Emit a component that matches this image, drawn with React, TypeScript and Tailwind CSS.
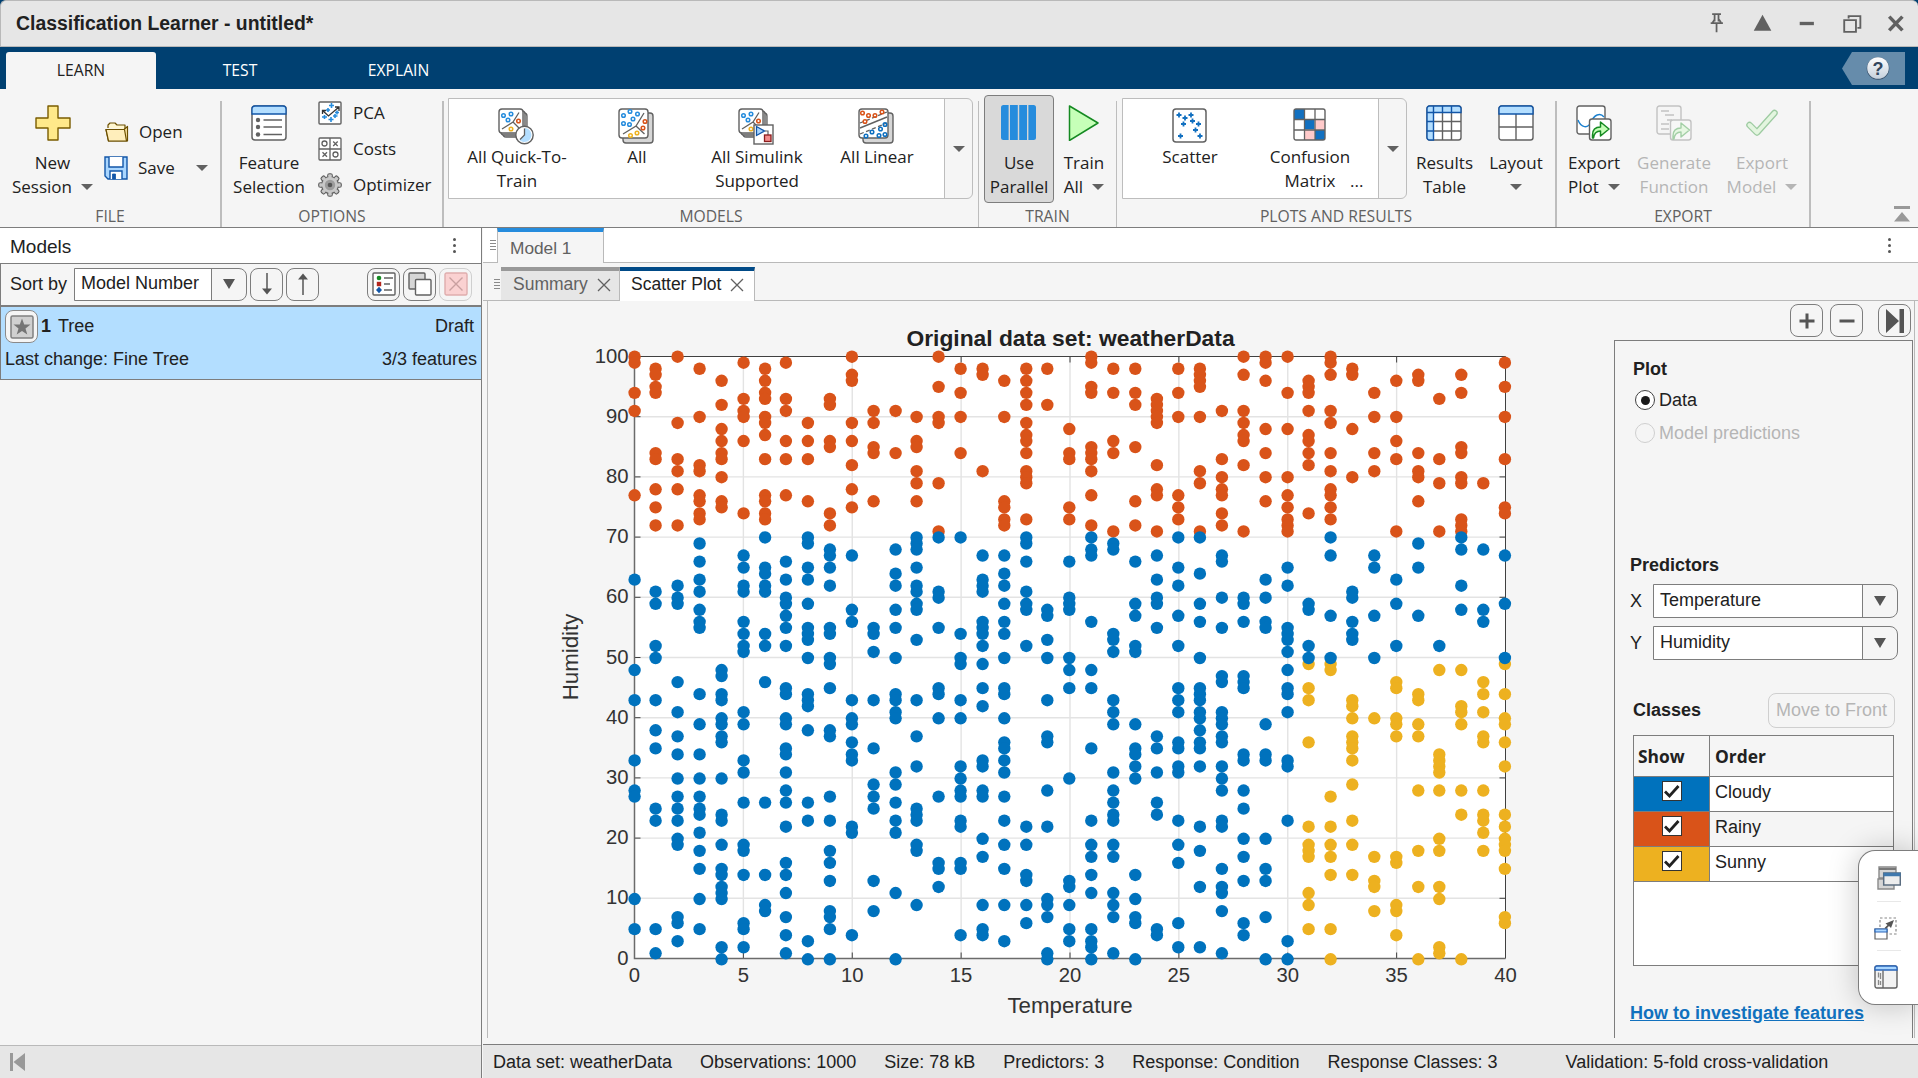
import type { ReactNode } from "react";

type Column = { red?: number[]; blue?: number[]; yellow?: number[] };

// Humidity values for every whole temperature from 0 to 40, split by class.
const columns: Column[] = [
  { red: [100, 99, 94, 91, 77], blue: [63, 48, 43, 33, 28, 27, 10, 5] },
  { red: [98, 97, 95, 94, 84, 83, 78, 75, 72], blue: [61, 59, 52, 50, 43, 38, 35, 25, 23, 5, 1] },
  { red: [100, 89, 83, 81, 78, 72], blue: [62, 60, 59, 46, 41, 37, 34, 30, 27, 25, 23, 20, 19, 7, 6, 3] },
  { red: [98, 90, 82, 81, 77, 76, 74, 73], blue: [69, 66, 63, 61, 58, 56, 55, 44, 39, 34, 30, 27, 25, 24, 21, 18, 15, 10, 5] },
  { red: [96, 92, 88, 86, 84, 83, 80, 76, 75], blue: [48, 47, 44, 43, 40, 39, 37, 36, 30, 24, 23, 19, 15, 14, 12, 11, 10, 2, 0] },
  { red: [99, 93, 91, 90, 86, 74], blue: [67, 65, 62, 61, 56, 54, 52, 51, 41, 39, 33, 31, 26, 19, 18, 14, 6, 5, 2] },
  { red: [98, 96, 94, 93, 90, 89, 87, 83, 77, 76, 74, 73], blue: [70, 65, 64, 62, 61, 54, 52, 46, 26, 14, 9, 8] },
  { red: [99, 93, 91, 86, 83, 77], blue: [66, 63, 60, 59, 57, 55, 52, 45, 44, 40, 39, 35, 34, 31, 28, 26, 22, 16, 14, 11, 7, 4, 1] },
  { red: [89, 86, 83, 76], blue: [70, 69, 65, 63, 59, 55, 54, 53, 50, 44, 43, 42, 38, 26, 23, 3, 0] },
  { red: [93, 92, 86, 85, 74, 72], blue: [68, 67, 65, 62, 55, 54, 50, 49, 45, 38, 37, 27, 23, 18, 16, 13, 8, 7, 5, 0] },
  { red: [100, 97, 96, 89, 86, 82, 78, 75], blue: [67, 58, 56, 43, 40, 39, 36, 34, 33, 22, 21, 4] },
  { red: [91, 89, 85, 84, 76], blue: [55, 54, 51, 43, 35, 29, 27, 25, 13, 8] },
  { red: [91, 84], blue: [68, 64, 62, 58, 55, 50, 44, 43, 41, 40, 31, 29, 26, 23, 21, 11, 0] },
  { red: [90, 86, 85, 81, 79, 76], blue: [70, 69, 68, 65, 62, 61, 59, 58, 53, 43, 37, 32, 25, 24, 23, 19, 18, 9] },
  { red: [100, 95, 90, 89, 79, 71], blue: [70, 61, 60, 55, 45, 44, 40, 27, 16, 15, 12] },
  { red: [98, 94, 90, 84], blue: [70, 54, 50, 49, 43, 40, 32, 30, 28, 27, 23, 22, 16, 15, 4] },
  { red: [98, 97, 81], blue: [67, 63, 62, 61, 56, 55, 54, 52, 49, 45, 42, 33, 32, 28, 27, 20, 17, 9, 5, 4] },
  { red: [96, 90, 76, 75, 73, 72], blue: [67, 64, 62, 59, 56, 54, 50, 45, 44, 40, 36, 35, 33, 31, 27, 23, 19, 15, 9, 3] },
  { red: [98, 96, 94, 92, 89, 87, 86, 84, 81, 80, 79, 73], blue: [70, 69, 66, 61, 59, 58, 52, 22, 19, 14, 13, 9, 6] },
  { red: [98, 92], blue: [58, 57, 53, 50, 43, 37, 36, 28, 22, 10, 9, 7, 1, 0] },
  { red: [88, 84, 83, 75, 73], blue: [66, 60, 59, 58, 50, 48, 45, 30, 13, 12, 9, 5, 3] },
  { red: [100, 99, 95, 94, 85, 84, 83, 81, 77, 72], blue: [70, 68, 67, 56, 48, 45, 35, 23, 19, 17, 14, 11, 5, 3, 2, 0] },
  { red: [98, 94, 86, 84, 71], blue: [69, 68, 54, 53, 51, 43, 41, 39, 31, 28, 26, 24, 23, 19, 17, 11, 9, 7, 1] },
  { red: [98, 94, 92, 85, 76, 72], blue: [66, 59, 57, 52, 51, 39, 35, 34, 32, 30, 14, 10, 7, 6, 0] },
  { red: [93, 92, 91, 90, 89, 82, 78, 77, 71], blue: [67, 63, 60, 59, 55, 37, 35, 31, 26, 24, 5, 4] },
  { red: [98, 94, 90, 77, 75, 73], blue: [70, 65, 62, 57, 52, 45, 43, 41, 36, 35, 32, 31, 23, 19, 16, 6, 2] },
  { red: [98, 97, 96, 95, 90, 81, 79, 71], blue: [70, 64, 59, 56, 50, 45, 44, 43, 41, 40, 38, 36, 35, 32, 22, 18, 12, 2] },
  { red: [91, 83, 80, 78, 77, 74, 72], blue: [67, 66, 60, 55, 47, 46, 41, 40, 39, 37, 36, 32, 30, 28, 23, 22, 15, 12, 11, 8, 1] },
  { red: [100, 97, 91, 89, 87, 86, 82, 71], blue: [60, 59, 56, 47, 46, 45, 34, 33, 28, 25, 20, 17, 13, 6, 4] },
  { red: [100, 99, 96, 88, 84, 80, 76], blue: [63, 60, 56, 55, 39, 34, 33, 20, 15, 13, 7, 0] },
  { red: [100, 94, 88, 80, 77, 75, 73, 72, 71], blue: [65, 62, 55, 54, 53, 51, 48, 45, 44, 41, 33, 32, 23, 3, 0] },
  { red: [96, 95, 94, 91, 87, 86, 84, 82, 74], blue: [59, 58, 52, 50], yellow: [49, 45, 43, 36, 22, 19, 18, 17, 11, 9, 5] },
  { red: [100, 99, 97, 91, 89, 84, 81, 78, 77, 75, 73], blue: [70, 67, 57, 50], yellow: [49, 48, 27, 22, 19, 17, 14, 5, 0] },
  { red: [98, 97, 88, 80], blue: [61, 60, 56, 54, 53], yellow: [43, 42, 40, 37, 36, 35, 33, 29, 23, 19, 14] },
  { red: [94, 90, 84, 81], blue: [67, 65, 57, 50], yellow: [40, 17, 13, 12, 8] },
  { red: [96, 90, 86, 83, 71], blue: [63, 59, 52], yellow: [46, 45, 40, 39, 37, 17, 16, 9, 8, 4] },
  { red: [97, 96, 84, 81, 80, 76], blue: [69, 65, 57], yellow: [44, 43, 39, 37, 28, 18, 12, 0] },
  { red: [93, 83, 79, 71], blue: [52], yellow: [48, 34, 33, 32, 31, 28, 20, 18, 12, 10, 2, 1] },
  { red: [97, 94, 85, 84, 80, 79, 73, 72, 71], blue: [70, 68, 62, 58], yellow: [48, 42, 41, 39, 28, 24, 0] },
  { red: [79], blue: [68, 58, 56], yellow: [46, 44, 41, 37, 36, 28, 24, 23, 21, 18] },
  { red: [99, 95, 90, 83, 75, 74], blue: [67, 59, 50], yellow: [49, 44, 40, 39, 36, 32, 24, 22, 20, 19, 18, 15, 7, 6] },
];

const snap = [
  0, 21, 43, 65, 87, 109, 130.5, 151.3, 173.3, 195.3, 217.3, 239, 261, 282, 304, 326, 348, 369.7, 391.7, 412.7, 434.7,
  456.7, 478.7, 500.7, 522.3, 543.7, 565.3, 587.3, 609, 631, 653, 674, 696, 717.7, 739.7, 761.7, 783.7, 804.7, 826.7,
  848.7, 870.3,
];
const classes = [
  { key: "red" as const, color: "#d95319" },
  { key: "yellow" as const, color: "#edb120" },
  { key: "blue" as const, color: "#0072bd" },
];
const L = 634.5, R = 1505.5, T = 356.5, B = 958.5;
const px = (v: number) => L + (v * (R - L)) / 40;
const py = (v: number) => B - (v * (B - T)) / 100;

function Chart() {
  const xs = [0, 5, 10, 15, 20, 25, 30, 35, 40];
  const ys = [0, 10, 20, 30, 40, 50, 60, 70, 80, 90, 100];
  return (
    <svg viewBox="488 301 1126 737" className="h-[737px] w-[1126px] shrink-0 font-['Liberation_Sans',sans-serif]">
      <rect x={L} y={T} width={R - L} height={B - T} fill="#fff" />
      {xs.slice(1, -1).map((v) => (
        <g key={v}>
          <path d={`M${px(v)} ${T}V${B}`} stroke="#e3e3e3" strokeWidth="1.4" />
          <path d={`M${px(v)} ${T}v6M${px(v)} ${B}v-6`} stroke="#404040" />
        </g>
      ))}
      {ys.slice(1, -1).map((v) => (
        <g key={v}>
          <path d={`M${L} ${py(v)}H${R}`} stroke="#e3e3e3" strokeWidth="1.4" />
          <path d={`M${L} ${py(v)}h6M${R} ${py(v)}h-6`} stroke="#404040" />
        </g>
      ))}
      <path d={`M${L} ${T}H${R}V${B}`} fill="none" stroke="#404040" />
      <path d={`M${L} ${T}V${B}H${R}`} fill="none" stroke="#6b6b6b" strokeWidth="1.5" />
      {xs.map((v) => (
        <text key={v} x={px(v)} y={981.5} fontSize="20.3" fill="#333" textAnchor="middle">{v}</text>
      ))}
      {ys.map((v) => (
        <text key={v} x={628.5} y={py(v) + 6} fontSize="20.3" fill="#333" textAnchor="end">{v}</text>
      ))}
      {classes.map((c) => (
        <g key={c.key} fill={c.color}>
          {columns.map((col, i) =>
            (col[c.key] ?? []).map((v) => (
              <circle key={`${i}-${v}`} cx={634.6 + snap[i]} cy={356.7 + (100 - v) * 6.026} r="6.2" />
            )),
          )}
        </g>
      ))}
      <text x="1070.5" y="346" fontSize="22.8" fontWeight="700" fill="#212121" textAnchor="middle">Original data set: weatherData</text>
      <text x="1070" y="1012.500" fontSize="22.3" fill="#333" textAnchor="middle">Temperature</text>
      <text transform="translate(578 657) rotate(-90)" fontSize="22.3" fill="#333" textAnchor="middle">Humidity</text>
    </svg>
  );
}

function Caret({ className = "" }: { className?: string }) {
  return (
    <svg viewBox="0 0 12 6" className={`h-[6px] w-[12px] shrink-0 ${className}`} fill="currentColor">
      <path d="M0 0h12L6 6z" />
    </svg>
  );
}

function Section({ title, width, line = "w-px", children }: { title: string; width: string; line?: string; children: ReactNode }) {
  return (
    <div className={`flex h-full shrink-0 ${width}`}>
      <div className="flex min-w-0 flex-1 flex-col">
        <div className="flex h-[116px]">{children}</div>
        <div className="mt-[2px] text-center text-[15.7px] leading-[22px] text-[#616161]">{title}</div>
      </div>
      <div className={`mt-[12px] h-[126px] shrink-0 bg-[#bdbdbd] ${line}`} />
    </div>
  );
}

function Big({ icon, lines, width, dim, arrow }: { icon: ReactNode; lines: string[]; width: string; dim?: boolean; arrow?: boolean }) {
  return (
    <div className={`flex shrink-0 flex-col items-center pt-4 leading-[24px] ${width} ${dim ? "text-[#b5b5b5]" : "text-[#212121]"}`}>
      <div className="h-[46px]">{icon}</div>
      <div>{lines[0]}</div>
      <div className="flex h-6 items-center gap-[9px] whitespace-nowrap">
        {lines[1]}
        {arrow && <Caret className={dim ? "text-[#b5b5b5]" : "text-[#616161]"} />}
      </div>
    </div>
  );
}

function GalleryItem({ icon, lines }: { icon: ReactNode; lines: string[] }) {
  return (
    <div className="flex w-[120px] shrink-0 flex-col items-center pt-[9px] leading-[24px]">
      <div className="mr-[2px] h-[37px]">{icon}</div>
      {lines.map((l) => (
        <div key={l} className="whitespace-nowrap">{l}</div>
      ))}
    </div>
  );
}

const S = "#616161";

function PlusIcon() {
  return (
    <svg viewBox="0 0 36 36" className="size-9">
      <path d="M13 1h10v12h12v10H23v12H13V23H1V13h12z" fill="#ffe98a" stroke="#7a5c00" strokeWidth="1.4" strokeLinejoin="round" />
    </svg>
  );
}
function FolderIcon() {
  return (
    <svg viewBox="0 0 24 20" className="h-5 w-6" stroke="#6b4f00" strokeWidth="1.2" strokeLinejoin="round">
      <path d="M3 6V3l2-2h5l2 2h8v4" fill="#fff6cf" />
      <path d="M1 7.500h18l3.500-3v14.500H3.500z" fill="#ffe9a8" />
      <path d="M1 7.500h18.500l2 11.500h-18z" fill="#ffeebb" />
    </svg>
  );
}
function SaveIcon() {
  return (
    <svg viewBox="0 0 24 24" className="size-6" stroke="#1256a8" strokeWidth="1.4">
      <path d="M1 1h22v22H4l-3-3z" fill="#a9d6ff" />
      <path d="M5 1v10h14V1" fill="#fff" />
      <path d="M6 23v-8h12v8" fill="#fff" />
      <path d="M8.500 18h3v5h-3z" fill="#1256a8" strokeWidth=".8" />
    </svg>
  );
}
function FeatureIcon() {
  return (
    <svg viewBox="0 0 36 36" className="size-9">
      <rect x="1" y="1" width="34" height="34" rx="3" fill="#fff" stroke={S} strokeWidth="1.5" />
      <path d="M1 9V4a3 3 0 0 1 3-3h28a3 3 0 0 1 3 3v5z" fill="#b3deff" stroke="#1256a8" strokeWidth="1.3" />
      <path d="M12.500 15H31M12.500 22H31M12.500 29.500H31" stroke={S} strokeWidth="1.3" />
      <g fill={S}><circle cx="7" cy="15" r="2.200" /><circle cx="7" cy="22" r="2.200" /><circle cx="7" cy="29.500" r="2.200" /></g>
    </svg>
  );
}
function PcaIcon() {
  return (
    <svg viewBox="0 0 24 24" className="size-6">
      <rect x="1" y="1" width="22" height="22" rx="1" fill="#fff" stroke={S} strokeWidth="1.4" />
      <path d="M13.500 2v5M11 4.500h5M10 7v4M8 9h4M6.500 14v4M4 16h5M13 16v5M10.500 18.500h5M17 13v4M15 15h4.500M19 9.500v4M17 11.500h4" stroke="#268cdd" strokeWidth="1.600" />
      <path d="M4.500 9.500l6 5.500L21 6M4.500 13V9.500H8M17 6h4v4" fill="none" stroke="#333" strokeWidth="1.300" />
    </svg>
  );
}
function CostsIcon() {
  return (
    <svg viewBox="0 0 24 24" className="size-6" fill="none" stroke={S} strokeWidth="1.3">
      <rect x="1" y="1" width="22" height="22" rx="1" fill="#fff" />
      <path d="M12 1v22M1 12h22" />
      <circle cx="6.500" cy="6.500" r="2.500" /><circle cx="17.500" cy="17.500" r="2.500" />
      <path d="M15.200 4.500l4.500 4.500m0-4.500l-4.500 4.500M4.500 15.200l4.500 4.500m0-4.500l-4.500 4.500" />
    </svg>
  );
}
function GearIcon() {
  return (
    <svg viewBox="0 0 24 24" className="size-6">
      {[0, 45, 90, 135].map((a) => (
        <rect key={a} x="9.800" y=".8" width="4.400" height="22.400" rx="1.500" fill="#c4c4c4" stroke={S} strokeWidth="1.300" transform={`rotate(${a} 12 12)`} />
      ))}
      <circle cx="12" cy="12" r="8.500" fill="#c8c8c8" stroke={S} strokeWidth="1.2" />
      {[0, 45, 90, 135].map((a) => (
        <rect key={a} x="10.400" y="1.600" width="3.200" height="20.800" fill="#c8c8c8" transform={`rotate(${a} 12 12)`} />
      ))}
      <circle cx="12" cy="12" r="5.200" fill="#9c9c9c" />
      <circle cx="12" cy="12" r="2.300" fill="#555" />
    </svg>
  );
}

function Rings({ points, color }: { points: number[][]; color: string }) {
  return (
    <g fill="none" stroke={color} strokeWidth="1.500">
      {points.map(([x, y]) => <circle key={`${x},${y}`} cx={x} cy={y} r="1.800" />)}
    </g>
  );
}
function SmallStack() {
  return (
    <>
      <rect x="5" y="5" width="24" height="24" rx="3" fill="#d6d6d6" stroke={S} strokeWidth="1.300" />
      <rect x="3" y="3" width="24" height="24" rx="3" fill="#d6d6d6" stroke={S} strokeWidth="1.300" />
      <rect x="1" y="1" width="24" height="24" rx="3" fill="#fff" stroke={S} strokeWidth="1.400" />
      <path d="M4 21l11-7 6-9.500M15 14l6 6" fill="none" stroke={S} strokeWidth="1.300" />
      <Rings color="#268cdd" points={[[5.5, 7.5], [13, 6], [10, 12]]} />
      <Rings color="#d95319" points={[[20.5, 13]]} />
      <Rings color="#edb120" points={[[13, 21]]} />
    </>
  );
}
function QuickIcon() {
  return (
    <svg viewBox="0 0 36 37" className="h-[37px] w-9">
      <SmallStack />
      <circle cx="26.500" cy="27" r="8.700" fill="#fff" stroke={S} strokeWidth="1.400" />
      <path d="M26.500 20v7l-5 5a7 7 0 1 0 5-12z" fill="#b3deff" />
      <path d="M26.500 20.500V27l-4.500 4.500" fill="none" stroke={S} strokeWidth="1.300" />
    </svg>
  );
}
function AllIcon() {
  return (
    <svg viewBox="0 0 36 36" className="size-9">
      <rect x="5" y="5" width="30" height="30" rx="3" fill="#d6d6d6" stroke={S} strokeWidth="1.400" />
      <rect x="1" y="1" width="29" height="29" rx="3" fill="#fff" stroke={S} strokeWidth="1.400" />
      <path d="M5 26l13-8 8-13M18 18l8.500 8" fill="none" stroke={S} strokeWidth="1.300" />
      <Rings color="#268cdd" points={[[5.5, 7.5], [12, 3.5], [19.5, 6], [15, 11], [5.5, 15.5], [11.5, 16.5]]} />
      <Rings color="#d95319" points={[[27, 13.5], [25, 20]]} />
      <Rings color="#edb120" points={[[19, 25], [12.5, 27.5]]} />
    </svg>
  );
}
function SimulinkIcon() {
  return (
    <svg viewBox="0 0 36 37" className="h-[37px] w-9">
      <SmallStack />
      <rect x="16" y="17" width="19" height="19" fill="#fff" stroke={S} strokeWidth="1.400" />
      <path d="M18.500 18.500v9l8-4.500z" fill="#a9d6ff" stroke="#1256a8" strokeWidth="1.300" />
      <path d="M27 23h3v4" fill="none" stroke={S} strokeWidth="1.200" />
      <rect x="26.500" y="27" width="6.500" height="6.500" fill="#f28b8b" stroke="#8a1c1c" strokeWidth="1.300" />
    </svg>
  );
}
function LinearIcon() {
  return (
    <svg viewBox="0 0 36 36" className="size-9">
      <rect x="5" y="5" width="30" height="30" rx="3" fill="#d6d6d6" stroke={S} strokeWidth="1.400" />
      <rect x="1" y="1" width="29" height="29" rx="3" fill="#fff" stroke={S} strokeWidth="1.400" />
      <path d="M2 20L29 9" stroke={S} strokeWidth="1.400" />
      <path d="M2 15L29 4M2 26L29 15" stroke={S} strokeWidth="1.300" strokeDasharray="4 2.500" />
      <Rings color="#d95319" points={[[4.5, 5], [10.500, 7.500], [17, 7.500], [24, 4], [7, 13.500]]} />
      <Rings color="#0d6fc0" points={[[27, 16.500], [22.500, 21], [14, 24], [8, 28], [21, 27.500], [27, 26.500]]} />
    </svg>
  );
}
function ParallelIcon() {
  return (
    <svg viewBox="0 0 35 35" className="mr-[2px] size-[35px]">
      <rect width="35" height="35" rx="2.500" fill="#268cdd" />
      <path d="M8.300 0v35M17.500 0v35M26.700 0v35" stroke="#d6d6d6" strokeWidth="1.400" />
    </svg>
  );
}
function PlayIcon() {
  return (
    <svg viewBox="0 0 36 36" className="size-9">
      <path d="M3.500 1v34.500L32 18z" fill="#c6ffb8" stroke="#158a22" strokeWidth="1.500" strokeLinejoin="round" />
    </svg>
  );
}
function ScatterIcon() {
  return (
    <svg viewBox="0 0 35 35" className="size-[35px]">
      <rect x="1" y="1" width="33" height="33" rx="3" fill="#fff" stroke={S} strokeWidth="1.500" />
      <g stroke="#1270c0" strokeWidth="1.800">
        {[[7, 7], [19, 7], [13, 10], [20.500, 13], [11.500, 16], [26.500, 16], [23.500, 22], [8.500, 28], [28, 28]].map(([x, y]) => (
          <path key={`${x},${y}`} d={`M${x - 2.5} ${y}h5M${x} ${y - 2.5}v5`} />
        ))}
      </g>
    </svg>
  );
}
function ConfusionIcon() {
  return (
    <svg viewBox="0 0 33 33" className="size-[33px]">
      <rect x="1" y="1" width="31" height="31" rx="2" fill="#fff" />
      <path d="M1 1h10v10H1zM11.500 11.500h10v10h-10zM22 22h10v10H22z" fill="#1270c0" />
      <path d="M22 11.500h10v10H22zM11.500 22h10v10h-10z" fill="#ffcaca" />
      <rect x="1" y="1" width="31" height="31" rx="2" fill="none" stroke={S} strokeWidth="1.400" />
      <path d="M11.500 1v31M22 1v31M1 11.500h31M1 22h31" stroke={S} strokeWidth="1.300" />
    </svg>
  );
}
function TableIcon() {
  return (
    <svg viewBox="0 0 36 36" className="mr-[2px] size-9">
      <rect x="1" y="1" width="34" height="34" rx="2.500" fill="#fff" stroke={S} strokeWidth="1.400" />
      <path d="M7.500 16.500H35M7.500 26H35M16.500 7.500V35M25.500 7.500V35" stroke={S} strokeWidth="1.400" />
      <path d="M7.500 35H3.500A2.500 2.500 0 0 1 1 32.500v-29A2.500 2.500 0 0 1 3.500 1h29A2.500 2.500 0 0 1 35 3.500v4H7.500z" fill="#b3deff" stroke="#1256a8" strokeWidth="1.400" />
      <path d="M1 7.500h6.500V1M16.500 1v6.500M25.500 1v6.500M1 16.500h6.500M1 26h6.500" fill="none" stroke="#1256a8" strokeWidth="1.400" />
    </svg>
  );
}
function LayoutIcon() {
  return (
    <svg viewBox="0 0 36 36" className="mr-px size-9">
      <rect x="1" y="1" width="34" height="34" rx="2.500" fill="#fff" stroke={S} strokeWidth="1.400" />
      <path d="M18 9v26M1 22h34" stroke={S} strokeWidth="1.400" />
      <path d="M1 9V3.500A2.500 2.500 0 0 1 3.500 1h29A2.500 2.500 0 0 1 35 3.500V9z" fill="#b3deff" stroke="#1256a8" strokeWidth="1.400" />
    </svg>
  );
}
const shareArrow = "M17 34v-3c0-5 3-8 8-8v-5l8.500 7-8.500 7v-5c-4 0-6.500 2.500-7 7z";
function ExportPlotIcon() {
  return (
    <svg viewBox="0 0 36 36" className="size-9">
      <rect x="1" y="1" width="28" height="28" rx="2.500" fill="#fff" stroke={S} strokeWidth="1.400" />
      <path d="M2 15c3 8 10 9 13 2s9-10 13-5" fill="none" stroke="#1b80cf" strokeWidth="1.400" />
      <rect x="13.500" y="14" width="21.500" height="21" rx="2.500" fill="#fff" stroke={S} strokeWidth="1.400" />
      <path d={shareArrow} transform="translate(-.5 -1)" fill="#c6ffb8" stroke="#158a22" strokeWidth="1.500" strokeLinejoin="round" />
    </svg>
  );
}
function GenerateIcon() {
  return (
    <svg viewBox="0 0 36 36" className="size-9">
      <rect x="1" y="1" width="24" height="28" rx="2.500" fill="#f5f5f5" stroke="#c2c2c2" strokeWidth="1.400" />
      <path d="M5 6h8M9 10h9M5 19h8M5 24h8M11 15h5" stroke="#c2c2c2" strokeWidth="1.400" />
      <rect x="14.500" y="15" width="20.500" height="20" rx="2.500" fill="#f7f7f7" stroke="#c2c2c2" strokeWidth="1.400" />
      <path d={shareArrow} fill="#e6f7e2" stroke="#a3cfa6" strokeWidth="1.400" strokeLinejoin="round" />
    </svg>
  );
}
function CheckIcon() {
  return (
    <svg viewBox="0 0 36 36" className="size-9">
      <path d="M5.500 20L13 27.500 30.500 8" fill="none" stroke="#9dcba1" strokeWidth="6.500" strokeLinecap="round" strokeLinejoin="round" />
      <path d="M5.500 20L13 27.500 30.500 8" fill="none" stroke="#e3f5df" strokeWidth="4" strokeLinecap="round" strokeLinejoin="round" />
    </svg>
  );
}

function Grip() {
  return (
    <div className="flex flex-col gap-[2px]">
      {[0, 1, 2, 3].map((i) => <div key={i} className="h-px w-[6px] bg-[#8a8a8a]" />)}
    </div>
  );
}
function Kebab() {
  return (
    <div className="flex flex-col gap-[3px]">
      {[0, 1, 2].map((i) => <div key={i} className="size-[3px] rounded-full bg-[#555]" />)}
    </div>
  );
}
function Cross({ className = "" }: { className?: string }) {
  return (
    <svg viewBox="0 0 14 14" className={`size-[14px] ${className}`}><path d="M1 1l12 12M13 1L1 13" stroke="#616161" strokeWidth="1.300" /></svg>
  );
}
function ToolBtn({ children, className = "border-[#7d7d7d]" }: { children: ReactNode; className?: string }) {
  return <div className={`flex size-[33px] shrink-0 items-center justify-center rounded-[8px] border ${className}`}>{children}</div>;
}
function Select({ value, className }: { value: string; className: string }) {
  return (
    <div className={`flex rounded-r-[8px] border border-[#7d7d7d] ${className}`}>
      <div className="flex flex-1 items-center border-r border-[#7d7d7d] bg-white pl-[6px] pb-[1px]">{value}</div>
      <div className="flex w-[34px] items-center justify-center">
        <svg viewBox="0 0 12 10" className="h-[10px] w-[12px]"><path d="M0 0h12L6 10z" fill="#555" /></svg>
      </div>
    </div>
  );
}

function TitleBar() {
  return (
    <div className="flex h-[47px] shrink-0 items-center rounded-t-[6px] border-t border-b border-l border-[#b9b9b9] bg-[#e6e6e6] pl-[15px] font-['Liberation_Sans',sans-serif] text-[19.4px] font-bold text-[#212121]">
      <span>Classification Learner - untitled*</span>
      <svg viewBox="1700 0 218 46" className="ml-auto h-[45px] w-[218px]" fill="none" stroke="#616161">
        <path d="M1711 13.500h9M1713.500 14v7M1717.500 14v7M1709.500 22.500h12.500M1711.500 22l2-3M1720 22l-2-3M1715.500 23v9" strokeWidth="1.800" transform="translate(-1 0)" />
        <path d="M1761.500 14l9 16.500h-18z" fill="#616161" stroke="none" />
        <path d="M1799.500 23h14.500" strokeWidth="3.400" />
        <path d="M1849 18v-2.500h12v12h-3M1844.500 19.500h12v12h-12z" strokeWidth="1.900" transform="translate(.500 0)" />
        <path d="M1891 16l13.500 14M1904.500 16L1891 30" strokeWidth="3.600" />
      </svg>
    </div>
  );
}

function Ribbon() {
  return (
    <div className="flex h-[139px] shrink-0 border-b border-[#7d7d7d] bg-[#f5f5f5] text-[17px] text-[#212121]">
      <Section title="FILE" width="w-[222px]" line="w-[2px]">
        <Big width="ml-[4px] w-[97px]" icon={<PlusIcon />} lines={["New", "Session"]} arrow />
        <div className="flex flex-1 flex-col pt-[25px] pl-[4px]">
          <div className="flex h-9 items-center gap-[10px]"><FolderIcon />Open</div>
          <div className="-ml-px flex h-9 items-center gap-[10px]"><SaveIcon />Save<Caret className="ml-[11px] text-[#616161]" /></div>
        </div>
      </Section>
      <Section title="OPTIONS" width="w-[222px]" line="w-[2px]">
        <Big width="w-[94px]" icon={<FeatureIcon />} lines={["Feature", "Selection"]} />
        <div className="flex flex-col pt-[6px] pl-[2px]">
          <div className="flex h-9 items-center gap-[11px]"><PcaIcon />PCA</div>
          <div className="flex h-9 items-center gap-[11px]"><CostsIcon />Costs</div>
          <div className="flex h-9 items-center gap-[11px]"><GearIcon />Optimizer</div>
        </div>
      </Section>
      <Section title="MODELS" width="w-[535px]">
        <div className="mt-[9px] ml-[4px] flex h-[101px] w-[525px] rounded-r-[6px] border border-[#bdbdbd]">
          <div className="flex w-[496px] border-r border-[#bdbdbd] bg-white pl-[8px]">
            <GalleryItem icon={<QuickIcon />} lines={["All Quick-To-", "Train"]} />
            <GalleryItem icon={<AllIcon />} lines={["All"]} />
            <GalleryItem icon={<SimulinkIcon />} lines={["All Simulink", "Supported"]} />
            <GalleryItem icon={<LinearIcon />} lines={["All Linear"]} />
          </div>
          <div className="flex flex-1 items-center justify-center text-[#616161]"><Caret /></div>
        </div>
      </Section>
      <Section title="TRAIN" width="w-[138px]">
        <div className="mt-[6px] ml-[5px] h-[108px] w-[70px] rounded-[4px] border border-[#7d7d7d] bg-[#d9d9d9]">
          <div className="-mt-[7px]"><Big width="w-[68px]" icon={<ParallelIcon />} lines={["Use", "Parallel"]} /></div>
        </div>
        <Big width="w-[60px]" icon={<PlayIcon />} lines={["Train", "All"]} arrow />
      </Section>
      <Section title="PLOTS AND RESULTS" width="w-[440px]" line="w-[2px]">
        <div className="mt-[9px] ml-[5px] flex h-[101px] w-[285px] shrink-0 rounded-r-[6px] border border-[#bdbdbd]">
          <div className="flex w-[256px] border-r border-[#bdbdbd] bg-white pl-[7px]">
            <GalleryItem icon={<ScatterIcon />} lines={["Scatter"]} />
            <GalleryItem icon={<ConfusionIcon />} lines={["Confusion", "Matrix"]} />
            <div className="-ml-[20px] pt-[70px] leading-[24px]">...</div>
          </div>
          <div className="flex flex-1 items-center justify-center text-[#616161]"><Caret /></div>
        </div>
        <Big width="ml-[1px] w-[73px]" icon={<TableIcon />} lines={["Results", "Table"]} />
        <Big width="w-[70px]" icon={<LayoutIcon />} lines={["Layout", ""]} arrow />
      </Section>
      <Section title="EXPORT" width="w-[254px]" line="w-[2px]">
        <Big width="w-[74px]" icon={<ExportPlotIcon />} lines={["Export", "Plot"]} arrow />
        <Big width="w-[86px]" icon={<GenerateIcon />} lines={["Generate", "Function"]} dim />
        <Big width="w-[90px]" icon={<CheckIcon />} lines={["Export", "Model"]} arrow dim />
      </Section>
      <div className="flex flex-1 items-end justify-end pr-2 pb-[5px]">
        <svg viewBox="0 0 16 16" className="size-4" fill="#999"><path d="M0 0h16v3H0zM8 6l8 9.500H0z" /></svg>
      </div>
    </div>
  );
}

function ModelsPanel() {
  return (
    <div className="flex w-[482px] shrink-0 flex-col border-r border-[#7d7d7d]">
      <div className="flex h-[35px] items-center justify-between bg-white pl-[10px] pr-[25px] text-[19px]"><span className="pt-[3px]">Models</span><Kebab /></div>
      <div className="flex h-[42px] items-center border-t border-l border-[#7d7d7d] pr-2 pb-px pl-[9px]">
        <span className="w-[64px]">Sort by</span>
        <Select value="Model Number" className="h-[33px] w-[173px]" />
        <div className="ml-[3px] flex gap-[3px]">
          <ToolBtn><svg viewBox="0 0 12 22" className="h-[22px] w-3"><path d="M6 0v18" stroke="#555" strokeWidth="1.500" /><path d="M1 15.500h10L6 21.500z" fill="#555" /></svg></ToolBtn>
          <ToolBtn><svg viewBox="0 0 12 22" className="h-[22px] w-3"><path d="M6 22V4" stroke="#555" strokeWidth="1.500" /><path d="M1 6.500h10L6 .5z" fill="#555" /></svg></ToolBtn>
        </div>
        <div className="mr-px ml-auto flex gap-[3px]">
          <ToolBtn>
            <svg viewBox="0 0 24 24" className="size-6">
              <rect x="1" y="1" width="22" height="22" rx="1" fill="#fff" stroke={S} strokeWidth="1.400" />
              <circle cx="7" cy="6" r="2.300" fill="#158a22" /><path d="M4.800 9.800h4.400v4.400H4.800z" fill="#b3261e" /><path d="M7 14.800l3 3.200-3 3.200-3-3.200z" fill="#1256a8" />
              <path d="M12 6h9M12 12h6M12 18h8" stroke={S} strokeWidth="1.300" />
            </svg>
          </ToolBtn>
          <ToolBtn>
            <svg viewBox="0 0 24 24" className="size-6" stroke={S} strokeWidth="1.400"><rect x="1" y="1" width="16" height="16" rx="1" fill="#d6d6d6" /><rect x="7.500" y="7.500" width="15.500" height="15.500" rx="1" fill="#fff" /></svg>
          </ToolBtn>
          <ToolBtn className="border-[#cfcfcf]">
            <svg viewBox="0 0 24 24" className="size-6"><rect x="1" y="1" width="22" height="22" rx="1.500" fill="#fad1d1" stroke="#dfadad" strokeWidth="1.400" /><path d="M5.500 5.500l13 13M18.500 5.500l-13 13" stroke="#c9a0a0" strokeWidth="1.400" /></svg>
          </ToolBtn>
        </div>
      </div>
      <div className="h-[75px] border-t-2 border-b border-l border-[#7d7d7d] bg-[#b3deff] pt-[3px] pr-[4px] pl-[4px]">
        <div className="flex h-[33px] items-center">
          <ToolBtn className="border-[#8a8a8a] bg-[#f5f5f5]">
            <svg viewBox="0 0 24 24" className="size-6"><rect x="1" y="1" width="22" height="22" rx="1.500" fill="#d0d0d0" stroke="#808080" strokeWidth="1.500" /><path d="M12 3.500l2.200 5.900 6.300.2-5 3.900 1.800 6.100L12 16l-5.300 3.600 1.800-6.100-5-3.900 6.300-.2z" fill="#757575" /></svg>
          </ToolBtn>
          <b className="ml-[3px] w-[17px]">1</b>Tree<span className="mr-[3px] ml-auto">Draft</span>
        </div>
        <div className="flex h-[33px] items-center justify-between"><span>Last change: Fine Tree</span><span>3/3 features</span></div>
      </div>
      <div className="flex-1" />
      <div className="flex h-[33px] items-center border-t border-[#b9b9b9] bg-[#e6e6e6] pl-[10px]">
        <svg viewBox="0 0 15 18" className="h-[18px] w-[15px]" fill="#999"><path d="M0 0h3v18H0zM15 0v18L3.500 9z" /></svg>
      </div>
    </div>
  );
}

function ClassRow({ name, swatch, row }: { name: string; swatch: string; row: string }) {
  return (
    <div className={`flex h-[35px] border-b border-[#7d7d7d] ${row}`}>
      <div className={`flex w-[76px] justify-center border-r border-[#7d7d7d] pt-[4px] ${swatch}`}>
        <svg viewBox="0 0 20 20" className="size-5"><rect x=".5" y=".5" width="19" height="19" fill="#fff" stroke="#333" /><path d="M3 10.500l4.500 4.500L16.500 5" fill="none" stroke="#212121" strokeWidth="2.800" /></svg>
      </div>
      <div className="pt-[4px] pl-[5px] leading-[22px]">{name}</div>
    </div>
  );
}

function PlotControls() {
  return (
    <div className="flex w-[301px] shrink-0 flex-col">
      <div className="flex h-[39px] justify-end pt-[3px] pr-[4px]">
        <ToolBtn><svg viewBox="0 0 16 16" className="size-4"><path d="M8 .5v15M.5 8h15" stroke="#555" strokeWidth="3" /></svg></ToolBtn>
        <div className="ml-[7px] flex"><ToolBtn><svg viewBox="0 0 16 16" className="size-4"><path d="M.5 8h15" stroke="#555" strokeWidth="3" /></svg></ToolBtn></div>
        <div className="ml-[15px] flex"><ToolBtn><svg viewBox="0 0 18 24" className="h-6 w-[18px]" fill="#555"><path d="M0 0l13 12L0 24zM13.500 0H18v24h-4.500z" /></svg></ToolBtn></div>
      </div>
      <div className="mr-[2px] h-[698px] border-x border-t border-[#7d7d7d] pl-[18px]">
        <div className="mt-[17px] h-[22px] font-bold leading-[22px]">Plot</div>
        <div className="mt-[9px] flex h-[22px] items-center gap-[4px] pl-[2px]">
          <div className="flex size-5 items-center justify-center rounded-full border border-[#424242] bg-white"><div className="size-[9px] rounded-full bg-[#1a1a1a]" /></div>Data
        </div>
        <div className="mt-[11px] flex h-[22px] items-center gap-[4px] pl-[2px] text-[#b5b5b5]">
          <div className="size-5 rounded-full border border-[#cfcfcf]" />Model predictions
        </div>
        <div className="mt-[110px] -ml-[3px] h-[22px] font-bold leading-[22px]">Predictors</div>
        <div className="mt-[8px] -ml-[3px] flex items-center"><span className="w-[23px]">X</span><Select value="Temperature" className="h-[34px] w-[245px]" /></div>
        <div className="mt-[8px] -ml-[3px] flex items-center"><span className="w-[23px]">Y</span><Select value="Humidity" className="h-[34px] w-[245px]" /></div>
        <div className="mt-[33px] mr-[17px] flex h-[35px] items-center justify-between">
          <b>Classes</b>
          <div className="flex h-[35px] w-[127px] items-center justify-center rounded-[8px] border border-[#cfcfcf] text-[#b5b5b5]">Move to Front</div>
        </div>
        <div className="mt-[7px] h-[231px] w-[261px] border border-[#7d7d7d] bg-white">
          <div className="flex h-[41px] items-center border-b border-[#7d7d7d] bg-[#f5f5f5] font-['Open_Sans',sans-serif] text-[17.400px] font-bold">
            <div className="flex h-full w-[76px] items-center border-r border-[#7d7d7d] pl-[4px]">Show</div>
            <div className="pl-[5px]">Order</div>
          </div>
          <ClassRow name="Cloudy" swatch="bg-[#0072bd]" row="bg-white" />
          <ClassRow name="Rainy" swatch="bg-[#d95319]" row="bg-[#f5f5f5]" />
          <ClassRow name="Sunny" swatch="bg-[#edb120]" row="bg-white" />
        </div>
        <div className="mt-[36px] -ml-[3px] text-[18px] font-bold leading-[22px] text-[#1171be] underline">How to investigate features</div>
      </div>
    </div>
  );
}

function DockPopup() {
  return (
    <div className="absolute top-[850px] right-0 flex h-[155px] w-[60px] flex-col items-center rounded-l-[17px] border border-r-0 border-[#7d7d7d] bg-white pt-[15px] shadow-[0_0_30px_rgba(0,0,0,0.22)]">
      <svg viewBox="0 0 24 24" className="size-6">
        <path d="M2 1h17v11H2zM1 13h16v10H1z" fill="#d5d5d5" stroke="#8a8a8a" strokeWidth="1.400" />
        <path d="M2 3h17" stroke="#777" strokeWidth="2" />
        <rect x="6.700" y="7" width="16.600" height="12" fill="#ededed" stroke="#5b6d80" strokeWidth="1.500" />
        <path d="M6.500 8.500h17" stroke="#3f78ad" strokeWidth="3.500" />
      </svg>
      <div className="mt-[11px] h-px w-6 bg-[#e8e8e8]" />
      <svg viewBox="0 0 24 24" className="mt-[14px] mr-[5px] size-6">
        <path d="M6 11V2h16v16h-7" fill="none" stroke="#888" strokeWidth="1.200" strokeDasharray="2.500 2" />
        <path d="M20 4l-3 8-2-2-3 3-1.500-1 3-3-2-1.500z" fill="#555" />
        <path d="M1 13h12v10H1z" fill="#fff" stroke={S} strokeWidth="1.200" /><path d="M1 13h12v3H1z" fill="#a9d6ff" stroke="#2a65ba" strokeWidth="1.200" />
      </svg>
      <div className="mt-[10px] h-px w-6 bg-[#e8e8e8]" />
      <svg viewBox="0 0 24 24" className="mt-[14px] mr-[6px] size-6">
        <rect x="1" y="1" width="22" height="22" rx="2" fill="#f3f3f3" stroke={S} strokeWidth="1.400" />
        <path d="M1 5V3a2 2 0 0 1 2-2h18a2 2 0 0 1 2 2v2z" fill="#a9d6ff" stroke="#2a65ba" strokeWidth="1.300" />
        <path d="M9 5.500V23" stroke={S} strokeWidth="1.300" /><path d="M4.500 7.500v5M6.500 8v6M4.500 15v5M6.500 16v4" stroke="#888" strokeWidth="1.300" />
      </svg>
    </div>
  );
}

export default function App() {
  return (
    <div className="relative flex h-[1078px] w-[1918px] flex-col overflow-hidden bg-[#004071] font-['Open_Sans',sans-serif]">
      <TitleBar />
      <div className="flex h-[42px] shrink-0 items-end bg-[#004071] pl-[6px] text-[15.700px] text-white">
        <div className="flex h-[37px] w-[150px] items-center justify-center rounded-t-[3px] bg-[#f5f5f5] text-[#212121]">LEARN</div>
        <div className="flex h-[37px] w-[168px] items-center justify-center">TEST</div>
        <div className="flex h-[37px] w-[149px] items-center justify-center">EXPLAIN</div>
        <svg viewBox="0 0 63 33" className="mr-[13px] mb-[4px] ml-auto h-[33px] w-[63px]">
          <defs><linearGradient id="orb" x1="0" y1="0" x2="0" y2="1"><stop offset="0" stopColor="#fff" /><stop offset="1" stopColor="#c5d0dc" /></linearGradient></defs>
          <path d="M0 16.500L10 0h53v33H10z" fill="#668cab" />
          <circle cx="36" cy="16.500" r="11.300" fill="#3a536d" /><circle cx="36" cy="16" r="10.800" fill="url(#orb)" />
          <text x="36" y="22.500" fontSize="18" fontWeight="700" fill="#33475e" textAnchor="middle" fontFamily="Liberation Sans">?</text>
        </svg>
      </div>
      <Ribbon />
      <div className="flex min-h-0 flex-1 bg-[#f5f5f5] font-['Liberation_Sans',sans-serif] text-[18px] text-[#212121]">
        <ModelsPanel />
        <div className="ml-px flex min-w-0 flex-1 flex-col">
          <div className="flex h-[35px] shrink-0 border-b border-[#b9b9b9] bg-white pl-[7px] text-[17.300px] text-[#616161]">
            <div className="flex w-[7px] items-center"><Grip /></div>
            <div className="-mb-px h-[35px] w-[107px] border-x border-t-4 border-x-[#b9b9b9] border-t-[#268cdd] bg-[#f5f5f5] pt-[5px] pl-[12px] leading-[22px]">Model 1</div>
            <div className="mr-[27px] ml-auto flex items-center"><Kebab /></div>
          </div>
          <div className="flex h-[38px] shrink-0 items-end border-b border-[#b9b9b9] pl-[11px] text-[17.500px]">
            <div className="flex h-[33px] w-[7px] items-center"><Grip /></div>
            <div className="flex h-[33px] w-[119px] items-center gap-[9px] border-r border-t-4 border-r-[#b9b9b9] border-t-[#999] bg-[#e6e6e6] pb-[2px] pl-[12px] text-[#616161]">Summary<Cross /></div>
            <div className="-mb-px flex h-[34px] w-[135px] items-center gap-[9px] border-r border-t-4 border-r-[#b9b9b9] border-t-[#004a87] bg-white pb-[3px] pl-[11px] whitespace-nowrap">Scatter Plot<Cross className="shrink-0" /></div>
          </div>
          <div className="mr-[3px] ml-[4px] flex h-[737px] border-x border-[#b9b9b9]">
            <Chart />
            <PlotControls />
          </div>
          <div className="mt-auto flex h-[34px] items-center gap-[28px] border-t border-[#7d7d7d] bg-[#e6e6e6] pt-[2px] pl-[10px] whitespace-nowrap">
            <span>Data set: weatherData</span><span>Observations: 1000</span><span>Size: 78 kB</span><span>Predictors: 3</span>
            <span>Response: Condition</span><span>Response Classes: 3</span><span className="ml-[40px]">Validation: 5-fold cross-validation</span>
          </div>
        </div>
      </div>
      <DockPopup />
    </div>
  );
}
